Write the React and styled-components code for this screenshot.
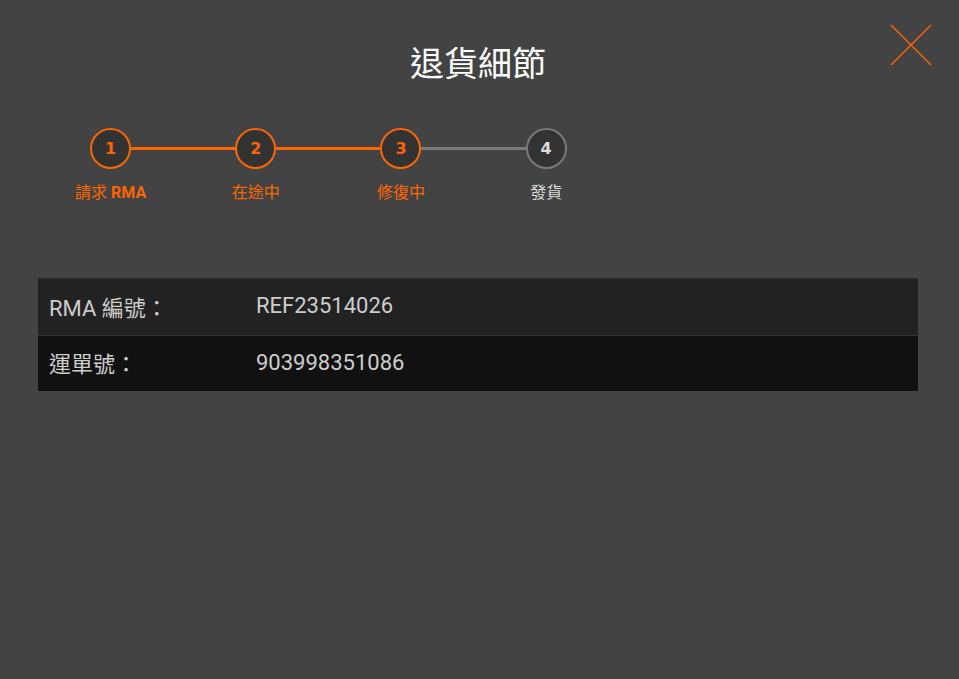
import React from "react";
import styled, { createGlobalStyle } from "styled-components";

const ORANGE = "#ff6600";

const steps = [
  { no: 1, label: "請求", code: "RMA" },
  { no: 2, label: "在途中" },
  { no: 3, label: "修復中" },
  { no: 4, label: "發貨" },
];
const current = 3;

const rows = [
  { label: "RMA 編號：", value: "REF23514026" },
  { label: "運單號：", value: "903998351086" },
];

const App = () => {
  return (
    <Page>
      <GlobalStyle />
      <CloseButton aria-label="close">
        <svg width="42" height="42" viewBox="0 0 42 42">
          <path d="M1 1 L41 41 M41 1 L1 41" stroke={ORANGE} strokeWidth="1.4" fill="none" />
        </svg>
      </CloseButton>
      <Title>退貨細節</Title>
      <Stepper>
        {steps.map((step, index) => (
          <Step key={step.no}>
            {index > 0 && <Connector done={step.no <= current} />}
            <Circle done={step.no <= current}>{step.no}</Circle>
            <StepLabel done={step.no <= current}>
              {step.label}
              {step.code && <Code> {step.code}</Code>}
            </StepLabel>
          </Step>
        ))}
      </Stepper>
      <Table>
        {rows.map((row, index) => (
          <Row key={row.label} odd={index % 2 === 1}>
            <Cell>{row.label}</Cell>
            <Cell>{row.value}</Cell>
          </Row>
        ))}
      </Table>
    </Page>
  );
};

export default App;

const GlobalStyle = createGlobalStyle`
  html, body {
    margin: 0;
    padding: 0;
    background: #434343;
  }
  body {
    font-family: Roboto, "Noto Sans CJK TC", sans-serif;
  }
`;

const Page = styled.div`
  position: relative;
  box-sizing: border-box;
  width: 959px;
  height: 679px;
  padding: 38px 41px 0 38px;
  background: #434343;
`;

const CloseButton = styled.div`
  position: absolute;
  top: 24px;
  left: 890px;
  width: 42px;
  height: 42px;
  cursor: pointer;
`;

const Title = styled.h1`
  margin: 0;
  text-align: center;
  font-family: "Noto Sans CJK TC", sans-serif;
  font-weight: 400;
  font-size: 34px;
  line-height: 48px;
  color: #ffffff;
`;

const Stepper = styled.div`
  display: grid;
  grid-template-columns: repeat(4, 1fr);
  width: 66%;
  margin-top: 42px;
`;

const Step = styled.div`
  position: relative;
  display: flex;
  flex-direction: column;
  align-items: center;
`;

const Connector = styled.div`
  position: absolute;
  top: 19px;
  right: 50%;
  width: 100%;
  height: 3px;
  background: ${(p) => (p.done ? ORANGE : "#7a7a7a")};
`;

const Circle = styled.div`
  position: relative;
  z-index: 1;
  box-sizing: border-box;
  width: 41px;
  height: 41px;
  border-radius: 50%;
  border: 2.5px solid ${(p) => (p.done ? ORANGE : "#7a7a7a")};
  background: #333333;
  display: flex;
  align-items: center;
  justify-content: center;
  font-family: "DejaVu Sans", sans-serif;
  font-weight: 600;
  font-size: 16px;
  color: ${(p) => (p.done ? ORANGE : "#dddddd")};
`;

const StepLabel = styled.div`
  margin-top: 13px;
  font-family: Roboto, "Noto Sans CJK TC", sans-serif;
  font-size: 16px;
  line-height: 22px;
  font-weight: 400;
  color: ${(p) => (p.done ? ORANGE : "#dddddd")};
`;

const Code = styled.span`
  font-weight: 700;
`;

const Table = styled.div`
  margin-top: 74px;
  width: 880px;
  border-top: 1px solid #2b2b2b;
`;

const Row = styled.div`
  display: grid;
  grid-template-columns: 207px 1fr;
  align-items: center;
  height: 56px;
  box-sizing: border-box;
  padding: 0 0 3px 11px;
  background: ${(p) => (p.odd ? "#111111" : "#222222")};
  border-top: ${(p) => (p.odd ? "1px solid #333333" : "none")};
`;

const Cell = styled.div`
  font-family: Roboto, "Noto Sans CJK TC", sans-serif;
  font-size: 22px;
  color: #cdcdcd;
`;
